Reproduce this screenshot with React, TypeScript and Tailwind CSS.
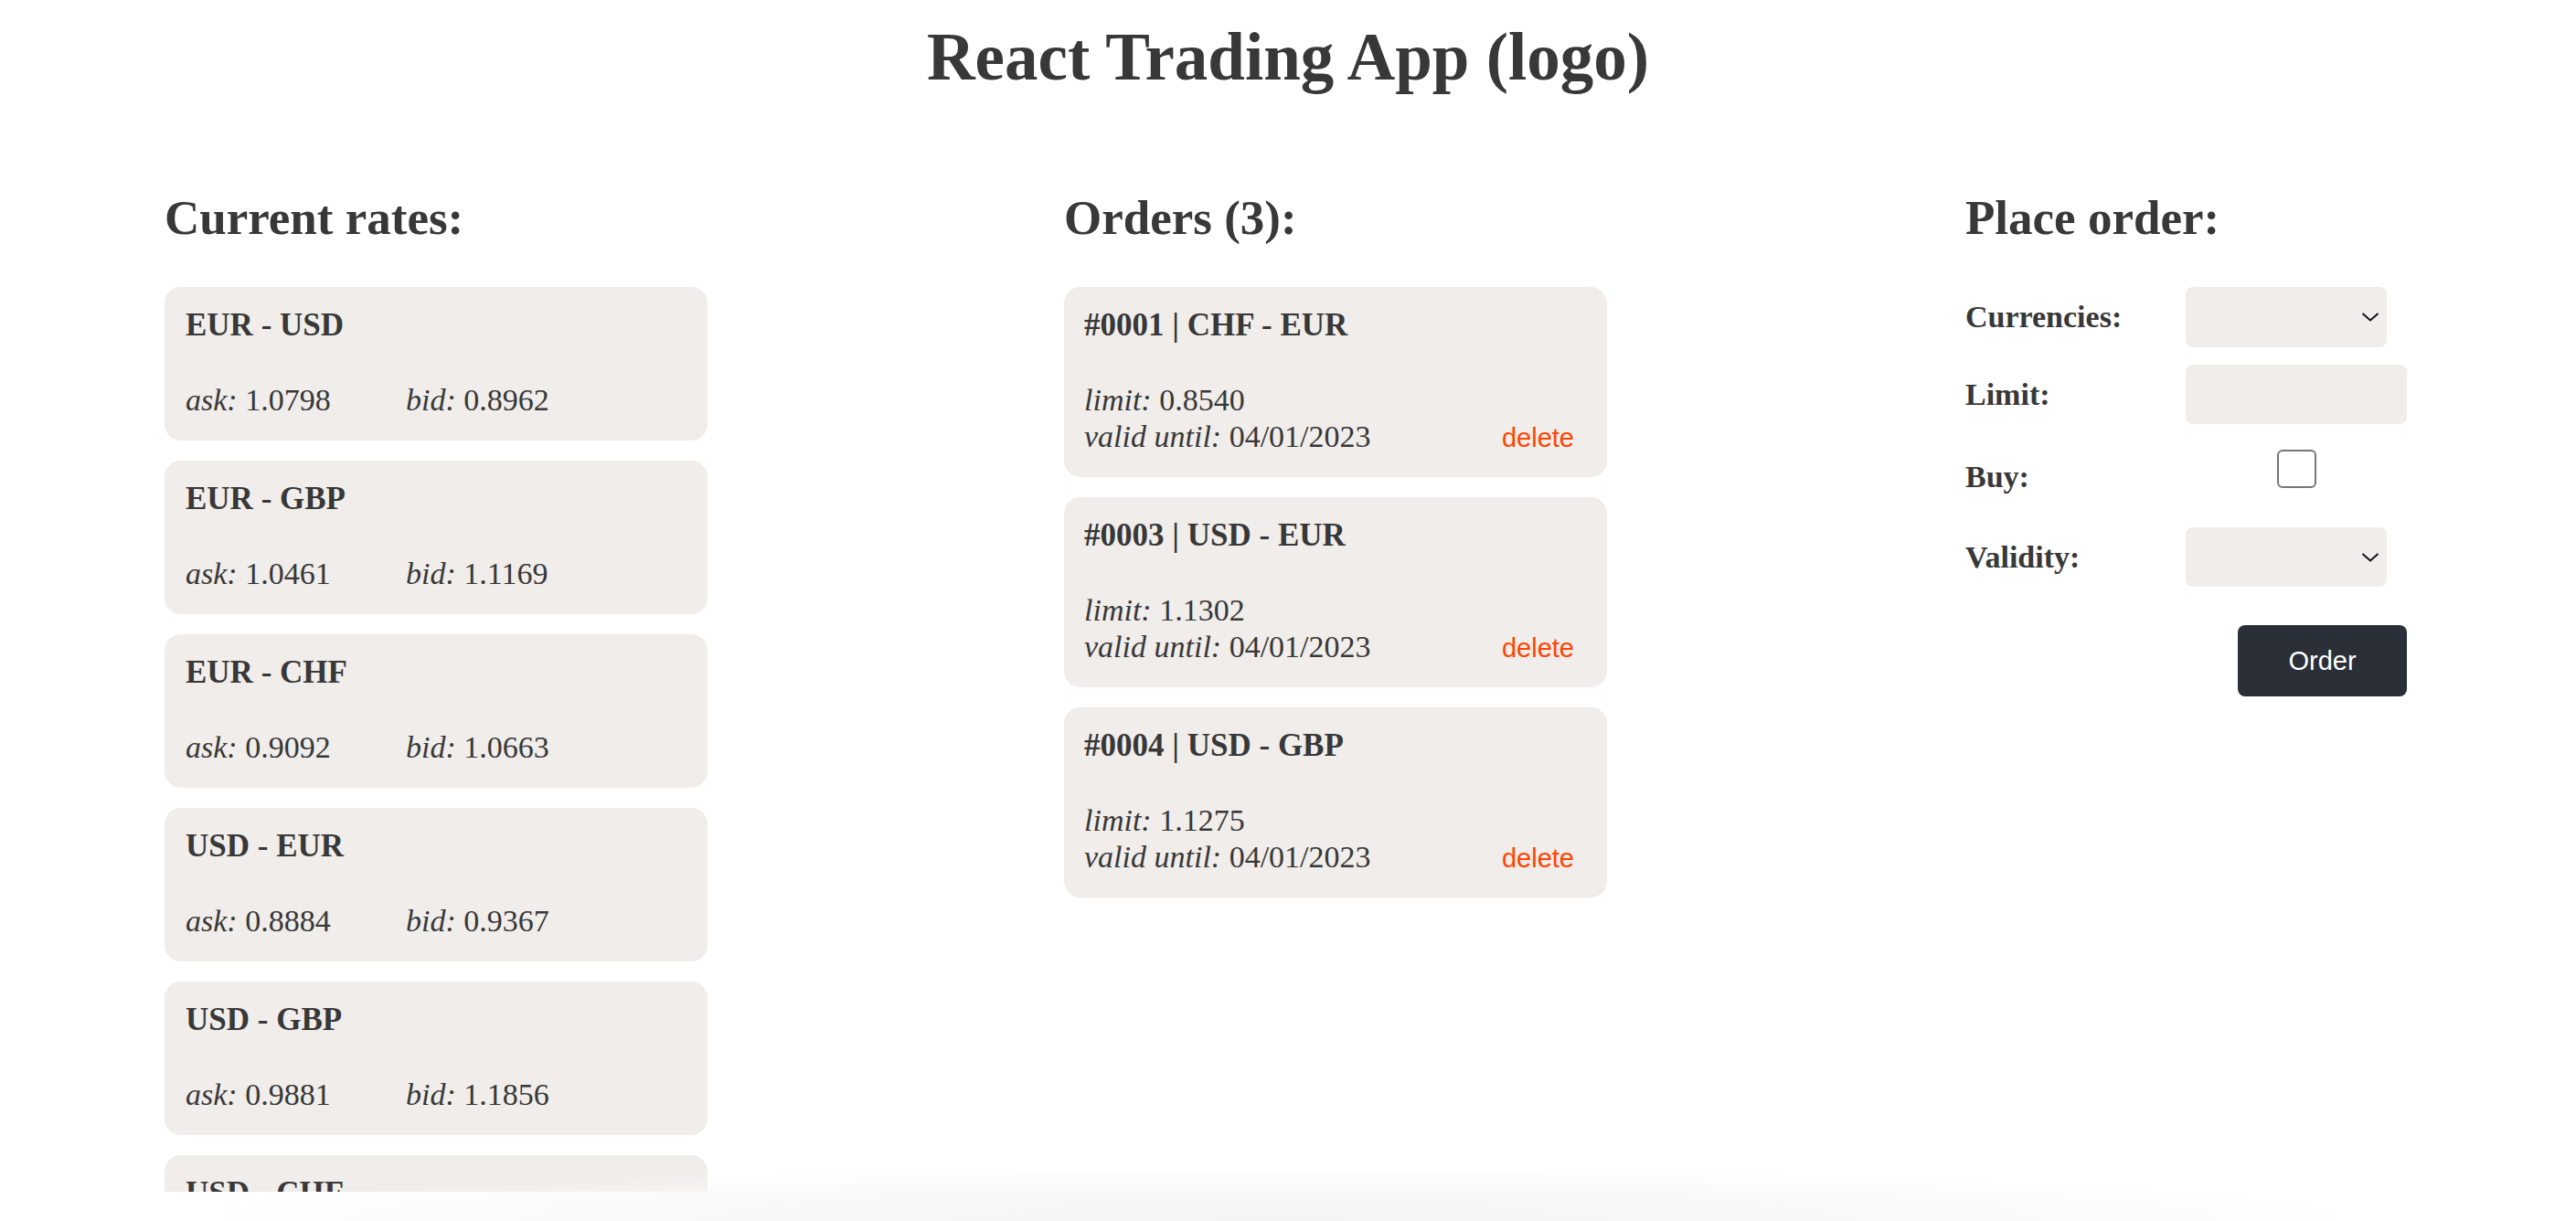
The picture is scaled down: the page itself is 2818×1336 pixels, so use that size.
import React from 'react';

type Rate = {
  pair: string;
  ask: string;
  bid: string;
};

type Order = {
  id: string;
  pair: string;
  limit: string;
  validUntil: string;
};

const rates: Rate[] = [
  { pair: 'EUR - USD', ask: '1.0798', bid: '0.8962' },
  { pair: 'EUR - GBP', ask: '1.0461', bid: '1.1169' },
  { pair: 'EUR - CHF', ask: '0.9092', bid: '1.0663' },
  { pair: 'USD - EUR', ask: '0.8884', bid: '0.9367' },
  { pair: 'USD - GBP', ask: '0.9881', bid: '1.1856' },
  { pair: 'USD - CHF', ask: '0.9214', bid: '1.0412' },
];

const orders: Order[] = [
  { id: '#0001', pair: 'CHF - EUR', limit: '0.8540', validUntil: '04/01/2023' },
  { id: '#0003', pair: 'USD - EUR', limit: '1.1302', validUntil: '04/01/2023' },
  { id: '#0004', pair: 'USD - GBP', limit: '1.1275', validUntil: '04/01/2023' },
];

function Chevron() {
  return (
    <svg
      className="pointer-events-none absolute right-[8px] top-1/2 -translate-y-1/2"
      width="20"
      height="11"
      viewBox="0 0 20 11"
      fill="none"
    >
      <path d="M1.5 1.5 L10 9 L18.5 1.5" stroke="#111" strokeWidth="2" />
    </svg>
  );
}

function RateCard({ rate }: { rate: Rate }) {
  return (
    <div className="w-[594px] shrink-0 rounded-[18px] bg-[#f0edea] px-[23px] pt-[24px] pb-[24px]">
      <h3 className="text-[35px] font-bold leading-none">{rate.pair}</h3>
      <div className="mt-[45px] flex text-[34px] leading-[40px]">
        <span className="w-[241px]">
          <i>ask:</i> {rate.ask}
        </span>
        <span>
          <i>bid:</i> {rate.bid}
        </span>
      </div>
    </div>
  );
}

function OrderCard({ order }: { order: Order }) {
  return (
    <div className="w-[594px] rounded-[18px] bg-[#f0edea] pl-[22px] pr-[36px] pt-[24px] pb-[24px]">
      <h3 className="text-[35px] font-bold leading-none">
        {order.id} | {order.pair}
      </h3>
      <div className="mt-[45px] text-[34px] leading-[40px]">
        <div>
          <i>limit:</i> {order.limit}
        </div>
        <div className="flex items-baseline justify-between">
          <span>
            <i>valid until:</i> {order.validUntil}
          </span>
          <button className="font-['Liberation_Sans',Arial,sans-serif] text-[29px] leading-none text-[#ff4500]">
            delete
          </button>
        </div>
      </div>
    </div>
  );
}

export default function App() {
  return (
    <div className="relative h-screen overflow-hidden bg-white font-['Liberation_Serif','Times_New_Roman',serif] text-[#383838]">
      <h1 className="pt-[26px] text-center text-[73px] font-bold leading-none">React Trading App (logo)</h1>

      <div className="mt-[113px] grid grid-cols-[984px_986px_1fr] pl-[180px]">
        {/* rates */}
        <section>
          <h2 className="text-[53px] font-bold leading-none">Current rates:</h2>
          <div className="mt-[49px] flex h-[990px] flex-col gap-[22px] overflow-hidden">
            {rates.map((r) => (
              <RateCard key={r.pair} rate={r} />
            ))}
          </div>
        </section>

        {/* orders */}
        <section>
          <h2 className="text-[53px] font-bold leading-none">Orders ({orders.length}):</h2>
          <div className="mt-[49px] flex flex-col gap-[22px]">
            {orders.map((o) => (
              <OrderCard key={o.id} order={o} />
            ))}
          </div>
        </section>

        {/* place order */}
        <section>
          <h2 className="text-[53px] font-bold leading-none">Place order:</h2>
          <form className="mt-[49px] flex w-[483px] flex-col text-[34px] font-bold leading-none">
            <div className="flex h-[66px] items-center">
              <label className="w-[241px]">Currencies:</label>
              <div className="relative">
                <select className="h-[66px] w-[220px] appearance-none rounded-[8px] bg-[#f0edea] outline-none" />
                <Chevron />
              </div>
            </div>
            <div className="mt-[19px] flex h-[65px] items-center">
              <label className="w-[241px]">Limit:</label>
              <input className="h-[65px] w-[242px] rounded-[8px] bg-[#f0edea] outline-none" />
            </div>
            <div className="mt-[28px] flex h-[60px] items-center">
              <label className="w-[241px]">Buy:</label>
              <div className="flex w-[242px] justify-center">
                <input
                  type="checkbox"
                  className="mb-[18px] h-[42px] w-[43px] appearance-none rounded-[6px] border-2 border-[#767676] bg-white"
                />
              </div>
            </div>
            <div className="mt-[25px] flex h-[65px] items-center">
              <label className="w-[241px]">Validity:</label>
              <div className="relative">
                <select className="h-[65px] w-[220px] appearance-none rounded-[8px] bg-[#f0edea] outline-none" />
                <Chevron />
              </div>
            </div>
            <div className="mt-[42px] flex justify-end">
              <button
                type="button"
                className="h-[78px] w-[185px] rounded-[8px] bg-[#2b2f37] font-['Liberation_Sans',Arial,sans-serif] text-[29px] font-normal text-white"
              >
                Order
              </button>
            </div>
          </form>
        </section>
      </div>

      <div className="pointer-events-none absolute bottom-0 left-[250px] h-[56px] w-[2300px] bg-[radial-gradient(ellipse_at_bottom,#f4f4f4_0%,#f9f9f9_45%,transparent_75%)]" />
    </div>
  );
}
